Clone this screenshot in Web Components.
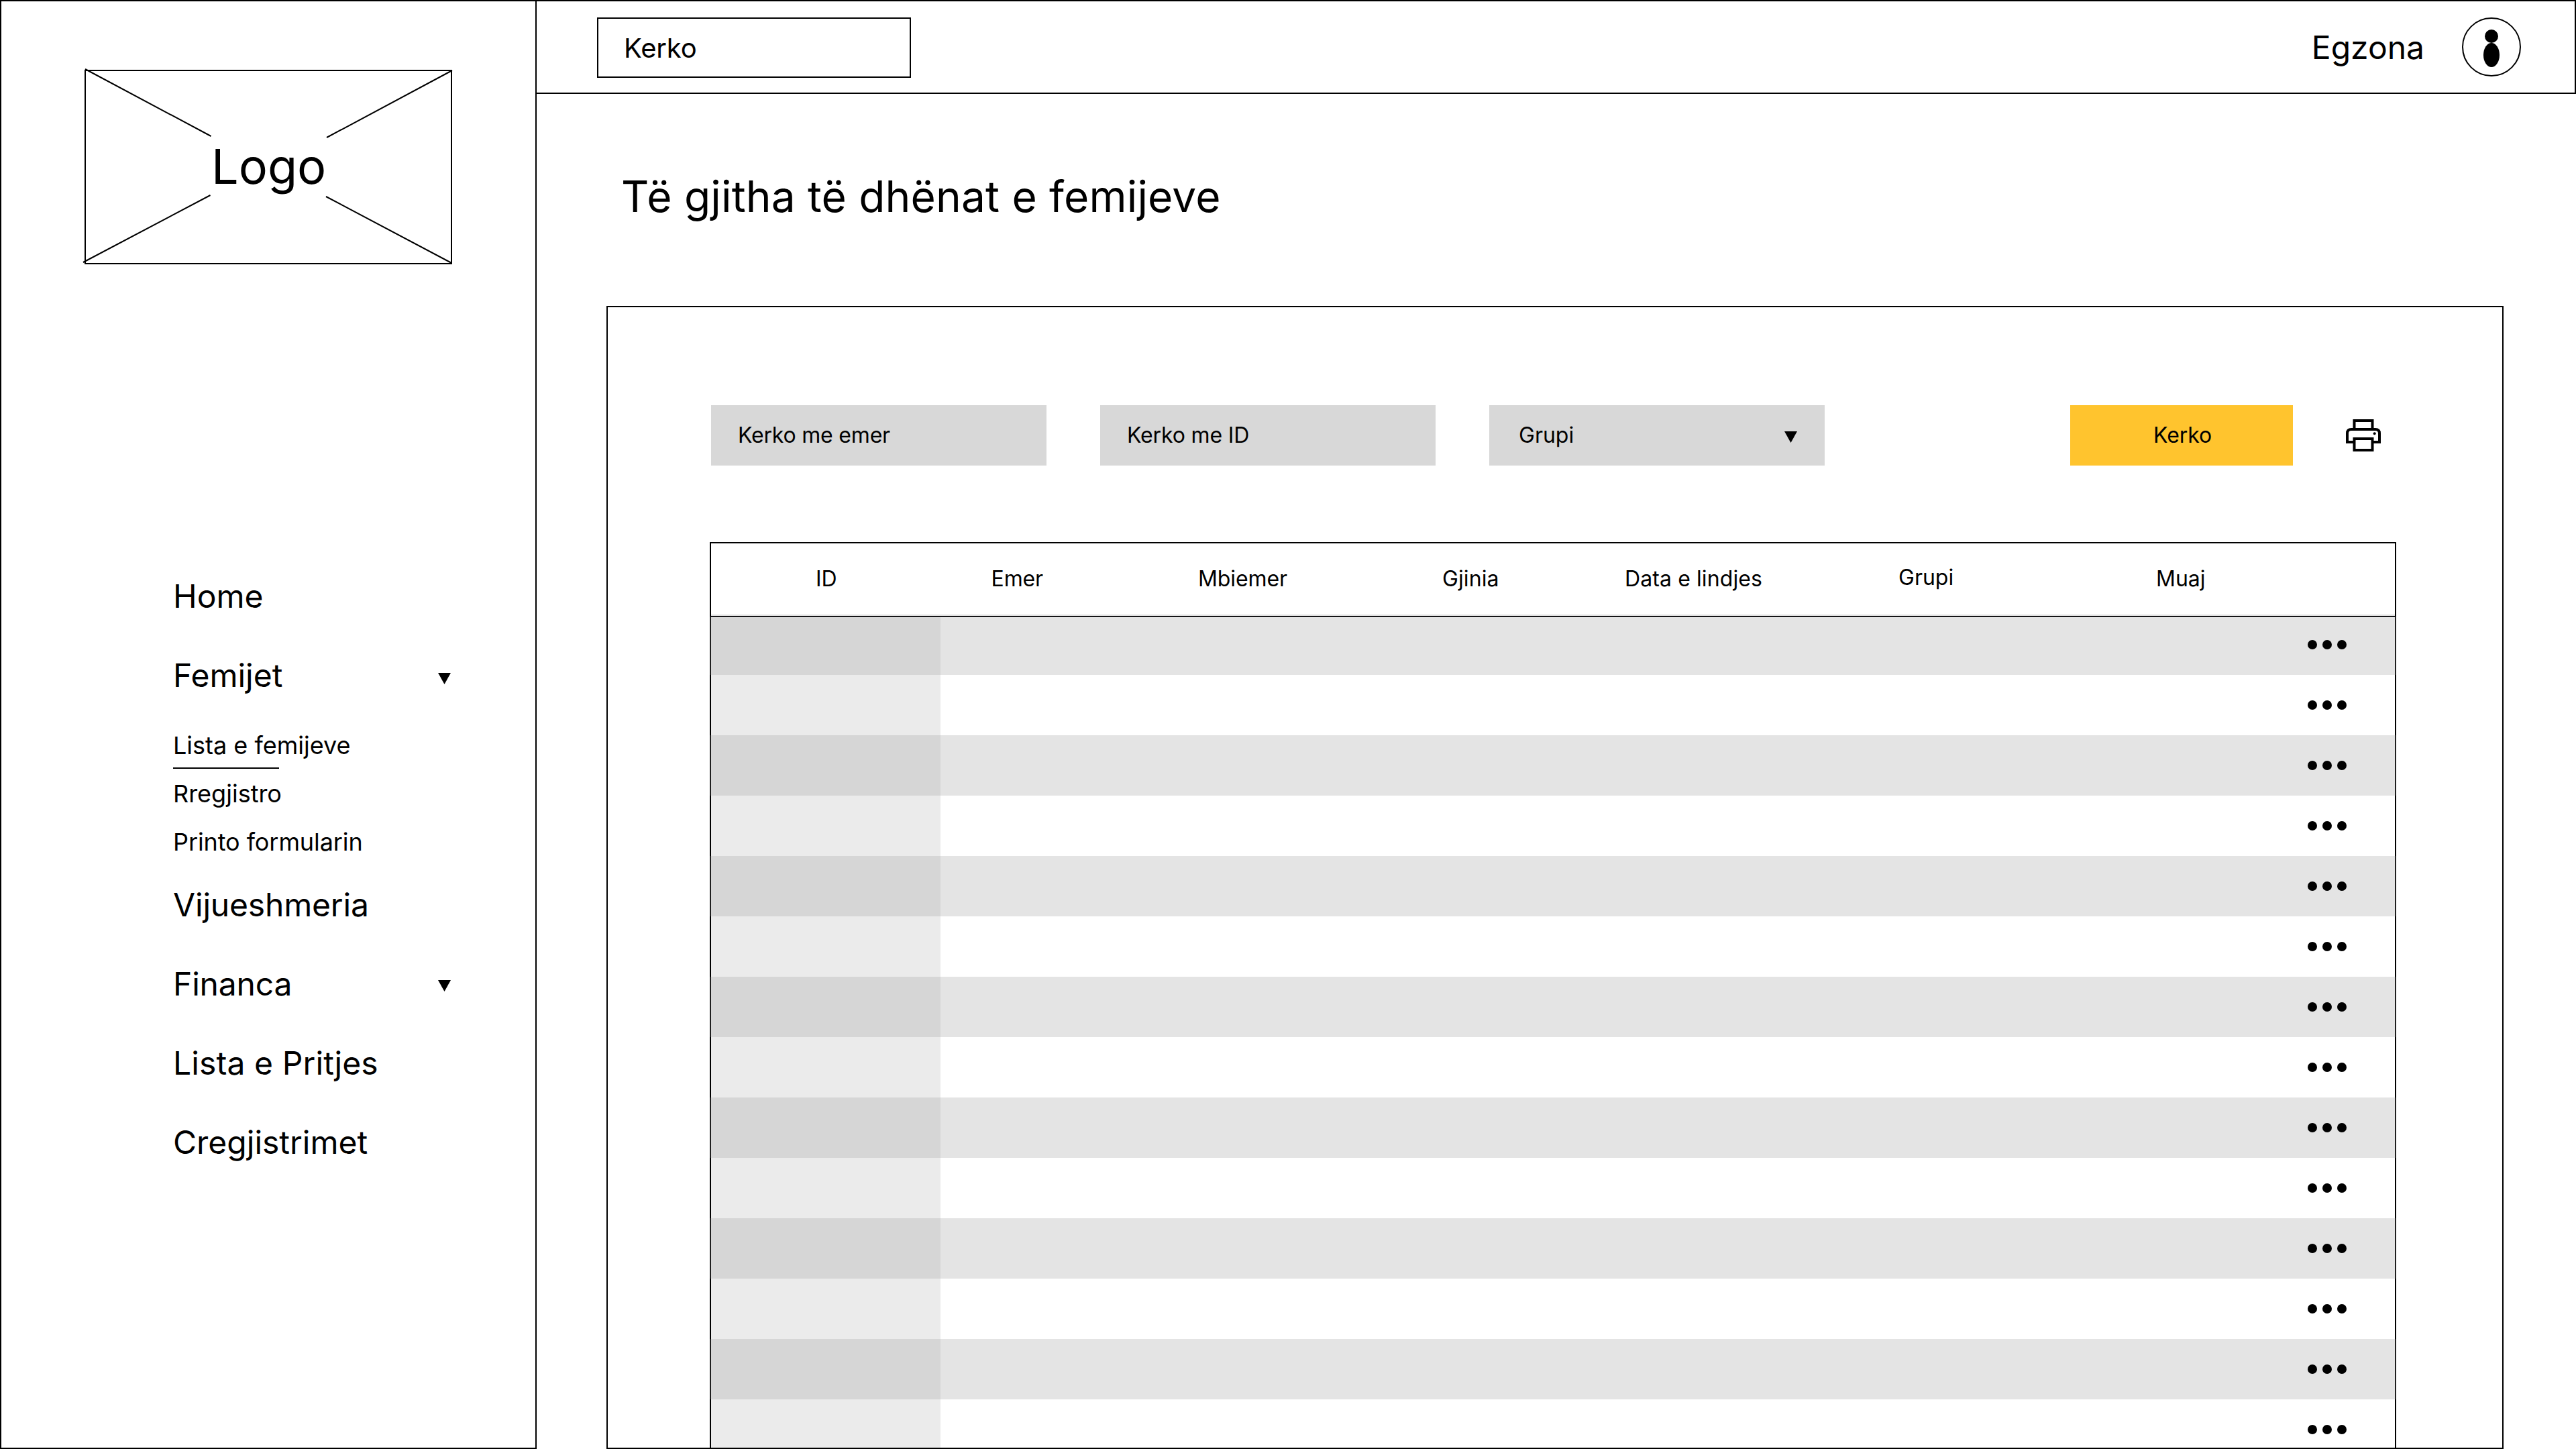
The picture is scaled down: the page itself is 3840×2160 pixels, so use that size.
<!DOCTYPE html>
<html lang="sq">
<head>
<meta charset="utf-8">
<title>Të gjitha të dhënat e femijeve</title>
<style>
html, body { margin: 0; height: 100%; }
body { background: #fff; color: #000; font-family: Inter, "Liberation Sans", sans-serif; font-weight: 400; overflow: hidden; }
</style>
</head>
<body>
<app-shell>
  <side-bar slot="side">
    <logo-box slot="logo">Logo</logo-box>
    <nav-item>Home</nav-item>
    <nav-item expandable>Femijet</nav-item>
    <sub-nav>
      <sub-item active>Lista e femijeve</sub-item>
      <sub-item>Rregjistro</sub-item>
      <sub-item style="letter-spacing:-.08px">Printo formularin</sub-item>
    </sub-nav>
    <nav-item style="letter-spacing:-.18px">Vijueshmeria</nav-item>
    <nav-item expandable style="letter-spacing:-.17px;--caret-top:24px">Financa</nav-item>
    <nav-item style="letter-spacing:.1px">Lista e Pritjes</nav-item>
    <nav-item>Cregjistrimet</nav-item>
  </side-bar>
  <top-bar slot="top">
    <search-box slot="search">Kerko</search-box>
    <span>Egzona</span>
  </top-bar>
  <page-title>Të gjitha të dhënat e femijeve</page-title>
  <data-panel>
    <filter-bar slot="filters">
      <filter-field style="letter-spacing:-.2px">Kerko me emer</filter-field>
      <filter-field style="letter-spacing:-.15px">Kerko me ID</filter-field>
      <filter-field select>Grupi</filter-field>
      <action-button slot="actions">Kerko</action-button>
      <print-icon slot="actions"></print-icon>
    </filter-bar>
    <data-table rows="14"></data-table>
  </data-panel>
</app-shell>
<script>
const define = (name, html, setup) => {
  const template = document.createElement('template');
  template.innerHTML = html;
  customElements.define(name, class extends HTMLElement {
    constructor() {
      super();
      this.attachShadow({ mode: 'open' }).append(template.content.cloneNode(true));
    }
    connectedCallback() { if (setup) setup(this, this.shadowRoot); }
  });
};

define('app-shell', `
<style>
:host { display: flex; width: 3840px; height: 2160px; overflow: hidden; }
main { flex: 1; min-width: 0; display: flex; flex-direction: column; }
</style>
<slot name="side"></slot>
<main><slot name="top"></slot><slot></slot></main>`);

define('side-bar', `
<style>
:host { display: flex; flex-direction: column; box-sizing: border-box; width: 800px; height: 2160px; border: 2px solid #000; flex: none; }
.logo { padding: 102px 0 0 124px; height: 857px; box-sizing: border-box; }
nav { display: flex; flex-direction: column; align-items: flex-start; padding-left: 256px; }
</style>
<div class="logo"><slot name="logo"></slot></div>
<nav><slot></slot></nav>`);

define('logo-box', `
<style>
:host { display: grid; width: 548px; height: 290px; font-size: 72px; }
svg, span { grid-area: 1 / 1; }
svg { overflow: visible; }
span { padding: 100px 0 0 189px; line-height: 87px; }
</style>
<svg width="548" height="290" fill="none" stroke="#000" stroke-width="2">
  <rect x="1" y="1" width="546" height="288"/>
  <path d="M1 -1L188.500 99M548 1L361 101M-2 287L187.500 187M360 189L547 288"/>
</svg>
<span><slot></slot></span>`);

define('caret-down', `
<style>:host { display: block; width: 19px; height: 17px; } svg { display: block; }</style>
<svg width="19" height="17"><path d="M0 0H19L9.500 17Z"/></svg>`);

define('nav-item', `
<style>
:host { display: flex; justify-content: space-between; width: 414px; height: 59px; margin-bottom: 59px; font-size: 48px; line-height: 59px; white-space: nowrap; }
caret-down { display: none; margin-top: var(--caret-top, 26px); }
:host([expandable]) caret-down { display: block; }
</style>
<span><slot></slot></span><caret-down></caret-down>`);

define('sub-nav', `
<style>:host { display: flex; flex-direction: column; margin: -6px 0 42px; gap: 28px; }
::slotted([active]) { margin-bottom: -13px; }</style>
<slot></slot>`);

define('sub-item', `
<style>
:host { display: block; font-size: 36px; line-height: 44px; white-space: nowrap; }
:host([active])::after { content: ""; display: block; width: 158px; height: 2px; margin-top: 11px; background: #000; }
</style>
<slot></slot>`);

define('top-bar', `
<style>
:host { display: flex; box-sizing: border-box; height: 140px; flex: none; border: 2px solid #000; border-left: 0; padding: 24px 80px 0 90px; align-items: flex-start; }
.user { margin-left: auto; display: flex; gap: 56px; font-size: 48px; line-height: 59px; }
.name { padding-top: 15px; }
svg { display: block; }
</style>
<slot name="search"></slot>
<div class="user">
  <div class="name"><slot></slot></div>
  <svg width="88" height="88">
    <circle cx="44" cy="44" r="43" fill="none" stroke="#000" stroke-width="2"/>
    <circle cx="44" cy="28" r="10"/>
    <ellipse cx="44" cy="56" rx="12" ry="18"/>
  </svg>
</div>`);

define('search-box', `
<style>:host { display: block; box-sizing: border-box; width: 468px; height: 90px; border: 2px solid #000; padding: 19px 0 0 38px; font-size: 40px; line-height: 49px; letter-spacing: -.15px; }</style>
<slot></slot>`);

define('page-title', `
<style>:host { display: block; box-sizing: border-box; height: 316px; flex: none; padding: 114px 0 0 126px; font-size: 64px; line-height: 77px; letter-spacing: .17px; white-space: nowrap; }</style>
<slot></slot>`);

define('data-panel', `
<style>:host { display: flex; flex-direction: column; box-sizing: border-box; width: 2828px; height: 1704px; margin-left: 104px; flex: none; border: 2px solid #000; padding: 146px 0 0 152px; }</style>
<slot name="filters"></slot><slot></slot>`);

define('filter-bar', `
<style>
:host { display: flex; width: 2492px; height: 90px; margin: 0 0 114px 2px; flex: none; }
.fields { display: flex; gap: 80px; }
.actions { display: flex; margin-left: auto; gap: 79px; }
</style>
<div class="fields"><slot></slot></div>
<div class="actions"><slot name="actions"></slot></div>`);

define('filter-field', `
<style>
:host { display: flex; justify-content: space-between; box-sizing: border-box; width: 500px; height: 90px; padding: 25px 41px 0 40px; background: #d8d8d8; font-size: 32px; line-height: 39px; white-space: nowrap; }
caret-down { display: none; margin-top: 14px; }
:host([select]) { padding-left: 44px; }
:host([select]) caret-down { display: block; }
</style>
<span><slot></slot></span><caret-down></caret-down>`);

define('action-button', `
<style>:host { display: block; box-sizing: border-box; width: 332px; height: 90px; padding: 25px 0 0 124px; background: #ffc42e; font-size: 32px; line-height: 39px; letter-spacing: -.1px; }</style>
<slot></slot>`);

define('print-icon', `
<style>:host { display: block; padding-top: 21px; width: 55px; } svg { display: block; }</style>
<svg width="52" height="48" fill="none" stroke="#000" stroke-width="4">
  <path d="M12.500 15V2H39.500V15"/>
  <path d="M12.500 34H2V21Q2 15 8 15H44Q50 15 50 21V34H39.500"/>
  <rect x="12.500" y="29" width="27" height="17"/>
  <circle cx="42.700" cy="21.300" r="2" fill="#000" stroke="none"/>
</svg>`);

define('more-dots', `
<style>:host { display: flex; gap: 8px; } i { width: 14px; height: 14px; border-radius: 50%; background: #000; }</style>
<i></i><i></i><i></i>`);

define('table-row', `
<style>
:host { display: flex; box-sizing: border-box; height: 90px; flex: none; border: solid #000; border-width: 0 2px; }
:host([shaded]) { --id-bg: #d6d6d6; --bg: #e4e4e4; border-color: #1f1f1f; }
:host([first]) { height: 86px; }
.id { width: 342px; background: var(--id-bg, #ebebeb); }
.rest { flex: 1; display: flex; align-items: center; justify-content: flex-end; padding-right: 72px; background: var(--bg, #fff); }
:host([first]) more-dots { margin-top: -4px; }
</style>
<div class="id"></div><div class="rest"><more-dots></more-dots></div>`);

define('data-table', `
<style>
:host { display: flex; flex-direction: column; width: 2514px; height: 1350px; overflow: hidden; }
.head { display: grid; grid-template-columns: 261.500px 308.500px 364px 272px 408px 384px 1fr; box-sizing: border-box; height: 112px; flex: none; border: 2px solid #000; border-bottom-color: #141416; box-shadow: inset 0 -2px #e4e4e4; padding: 33px 0 0 156px; font-size: 32px; line-height: 39px; white-space: nowrap; }
.raised { margin-top: -2px; }
.tight { letter-spacing: -.1px; }
.wide { letter-spacing: .1px; }
</style>
<div class="head"><span>ID</span><span class="tight">Emer</span><span class="tight">Mbiemer</span><span class="wide">Gjinia</span><span class="wide">Data e lindjes</span><span class="raised">Grupi</span><span>Muaj</span></div>`,
(host, root) => {
  const count = Number(host.getAttribute('rows'));
  for (let i = 0; i < count; i++) {
    const row = document.createElement('table-row');
    row.toggleAttribute('shaded', i % 2 === 0);
    row.toggleAttribute('first', i === 0);
    root.append(row);
  }
});
</script>
</body>
</html>
